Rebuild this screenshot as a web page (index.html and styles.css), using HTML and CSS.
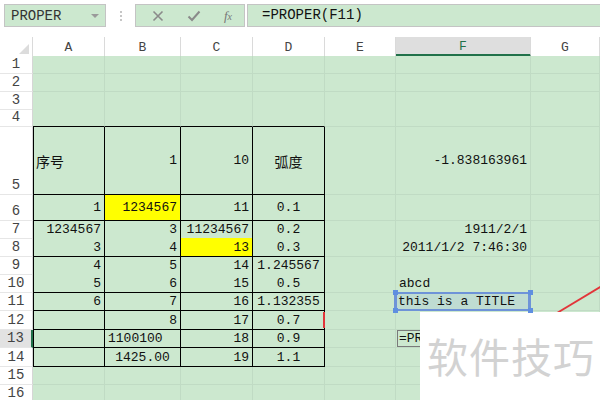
FILE: index.html
```html
<!DOCTYPE html>
<html lang="zh">
<head>
    <meta charset="UTF-8">
    <title>PROPER</title>
    <link rel="stylesheet" href="styles.css">
</head>
<body>
    <div class="toolbar">
        <div class="name-box">
            <span>PROPER</span>
            <span class="caret"></span>
        </div>
        <div class="grip"><i></i><i></i><i></i></div>
        <div class="fx-box">
            <svg width="12" height="12" viewBox="0 0 12 12"><path d="M1.5 1.5l9 9M10.5 1.5l-9 9" stroke="#8a8a8a" stroke-width="1.6"/></svg>
            <svg width="14" height="12" viewBox="0 0 14 12"><path d="M1.5 6.5l3.5 3.5 7.5-8.5" stroke="#8a8a8a" stroke-width="2" fill="none"/></svg>
            <span class="fx">f<small>x</small></span>
        </div>
        <div class="formula">=PROPER(F11)</div>
    </div>

    <div class="sheet" id="sheet">
        <div class="row head">
            <div class="corner"></div>
            <div class="col-head">A</div>
            <div class="col-head">B</div>
            <div class="col-head">C</div>
            <div class="col-head">D</div>
            <div class="col-head">E</div>
            <div class="col-head active">F</div>
            <div class="col-head">G</div>
        </div>
    </div>

    <svg class="arrow" width="600" height="400"><line x1="557" y1="313" x2="602" y2="286" stroke="#e2353a" stroke-width="2"/></svg>
    <div class="watermark">软件技巧</div>

    <script>
        const sheet = document.getElementById('sheet');
        const heights = [18, 18, 17, 18, 68, 26, 17, 19, 17, 19, 18, 19, 18, 19, 18, 18];
        const cols = ['A', 'B', 'C', 'D', 'E', 'F', 'G'];

        // [text, classes]
        const data = {
            5: { A: ['序号', 'cjk'], B: ['1', 'r'], C: ['10', 'r'], D: ['弧度', 'c cjk'], F: ['-1.838163961', 'r'] },
            6: { A: ['1', 'r'], B: ['1234567', 'r yellow'], C: ['11', 'r'], D: ['0.1', 'c'] },
            7: { A: ['1234567', 'r'], B: ['3', 'r'], C: ['11234567', 'r'], D: ['0.2', 'c'], F: ['1911/2/1', 'r'] },
            8: { A: ['3', 'r'], B: ['4', 'r'], C: ['13', 'r yellow'], D: ['0.3', 'c'], F: ['2011/1/2 7:46:30', 'r'] },
            9: { A: ['4', 'r'], B: ['5', 'r'], C: ['14', 'r'], D: ['1.245567', 'c'] },
            10: { A: ['5', 'r'], B: ['6', 'r'], C: ['15', 'r'], D: ['0.5', 'c'], F: ['abcd', ''] },
            11: { A: ['6', 'r'], B: ['7', 'r'], C: ['16', 'r'], D: ['1.132355', 'c'], F: ['this is a TITLE', 'selected'] },
            12: { B: ['8', 'r'], C: ['17', 'r'], D: ['0.7', 'c mark'] },
            13: { B: ['1100100', ''], C: ['18', 'r'], D: ['0.9', 'c'], F: ['=PR', 'editing'] },
            14: { B: ['1425.00', 'c'], C: ['19', 'r'], D: ['1.1', 'c'] }
        };

        heights.forEach((h, i) => {
            const n = i + 1;
            const row = document.createElement('div');
            row.className = 'row';
            row.style.height = h + 'px';

            const head = document.createElement('div');
            head.className = 'row-head' + (n === 13 ? ' active' : '');
            head.textContent = n;
            row.appendChild(head);

            cols.forEach((c, ci) => {
                const cell = document.createElement('div');
                const entry = (data[n] || {})[c];
                cell.className = 'cell';
                if (entry) {
                    cell.className += ' ' + entry[1];
                    const span = document.createElement('span');
                    span.textContent = entry[0];
                    cell.appendChild(span);
                }
                if (n >= 5 && n <= 14 && ci < 4) cell.classList.add('box');
                if (n >= 5 && n <= 14 && ci === 0) cell.classList.add('box-left');
                if (n === 4 && ci < 4) cell.classList.add('box-top');
                if (entry && entry[1] === 'selected') {
                    ['tl', 'tr', 'bl', 'br'].forEach(p => {
                        const handle = document.createElement('i');
                        handle.className = 'handle ' + p;
                        cell.appendChild(handle);
                    });
                }
                row.appendChild(cell);
            });
            sheet.appendChild(row);
        });
    </script>
</body>
</html>
```

FILE: styles.css
```css
/* Spreadsheet view */
body {
    margin: 0;
    width: 600px;
    height: 400px;
    overflow: hidden;
    position: relative;
    background-color: #fff;
    font-family: "Liberation Mono", "Noto Sans CJK SC", monospace;
    font-size: 13px;
    color: #111;
}

.toolbar {
    display: flex;
    align-items: flex-start;
    height: 37px;
    padding-top: 4px;
    box-sizing: border-box;
}

.name-box {
    display: flex;
    align-items: center;
    justify-content: space-between;
    margin-left: 4px;
    width: 102px;
    height: 23px;
    padding: 0 6px 0 6px;
    box-sizing: border-box;
    border: 1px solid #c4c4c4;
    background-color: #cce8cf;
    color: #333;
    font-size: 14px;
}

.caret {
    width: 0;
    height: 0;
    border-left: 4px solid transparent;
    border-right: 4px solid transparent;
    border-top: 4px solid #9a9a9a;
}

.grip {
    display: flex;
    flex-direction: column;
    gap: 2px;
    margin: 7px 13px 0 14px;
}

.grip i {
    width: 2px;
    height: 2px;
    background-color: #c6c6c6;
}

.fx-box {
    display: flex;
    align-items: center;
    justify-content: space-between;
    width: 110px;
    height: 23px;
    padding: 0 12px 0 16px;
    box-sizing: border-box;
    border: 1px solid #c4c4c4;
    background-color: #cce8cf;
}

.fx {
    font-family: "Liberation Serif", serif;
    font-style: italic;
    font-size: 13px;
    color: #777;
}

.fx small {
    font-size: 10px;
}

.formula {
    flex: 1;
    height: 23px;
    margin-left: 2px;
    padding-left: 14px;
    line-height: 21px;
    box-sizing: border-box;
    border: 1px solid #c4c4c4;
    border-right: none;
    background-color: #cce8cf;
    font-size: 14px;
}

.sheet {
    display: flex;
    flex-direction: column;
}

.row {
    display: grid;
    grid-template-columns: 33px 72px 76px 72px 72px 71px 135px 1fr;
}

.row.head {
    height: 19px;
}

.corner {
    position: relative;
    border-right: 1px solid #dadada;
}

.corner::after {
    content: "";
    position: absolute;
    right: 3px;
    bottom: 3px;
    border-left: 10px solid transparent;
    border-bottom: 10px solid #dcdcdc;
}

.col-head {
    display: flex;
    align-items: center;
    justify-content: center;
    border-right: 1px solid #dadada;
    color: #444;
}

.col-head.active {
    background-color: #dedede;
    border-bottom: 3px solid #21714a;
    color: #21714a;
    padding-top: 2px;
}

.row-head {
    display: flex;
    align-items: flex-end;
    justify-content: center;
    padding-bottom: 1px;
    box-sizing: border-box;
    border-right: 1px solid #d6d6d6;
    border-bottom: 1px solid #e6e6e6;
    color: #444;
    font-size: 14px;
}

.row-head.active {
    background-color: #e2e2e2;
    border-right: 2px solid #21714a;
}

.cell {
    position: relative;
    display: flex;
    align-items: center;
    padding: 0 3px;
    box-sizing: border-box;
    white-space: nowrap;
    background-color: #cce8cf;
    border-right: 1px solid #c0dbc4;
    border-bottom: 1px solid #c0dbc4;
}

.cell.r {
    justify-content: flex-end;
}

.cell.c {
    justify-content: center;
}

.cell.cjk span {
    font-size: 14px;
}

.cell.yellow {
    background-color: #ffff00;
}

.cell.box {
    border-right-color: #000;
    border-bottom-color: #000;
}

.cell.box-left {
    box-shadow: inset 1px 0 #000;
}

.cell.box-top {
    border-bottom-color: #000;
}

.cell.mark::after {
    content: "";
    position: absolute;
    right: -1px;
    top: 1px;
    bottom: 1px;
    width: 2px;
    background-color: #e2353a;
}

.cell.selected {
    background-color: #bfdcd2;
    padding-left: 2px;
}

.cell.selected::after {
    content: "";
    position: absolute;
    inset: -1px -1px -1px -2px;
    border: 2px solid #6e93d8;
    border-left-width: 3px;
    border-right-width: 3px;
}

.handle {
    position: absolute;
    z-index: 2;
    width: 5px;
    height: 5px;
    background-color: #5f8fe0;
}

.handle.tl { left: -3px; top: -3px; }
.handle.tr { right: -3px; top: -3px; }
.handle.bl { left: -3px; bottom: -3px; }
.handle.br { right: -3px; bottom: -3px; }

.cell.editing span {
    width: 80px;
    padding: 0 1px;
    border: 1px solid #7a7a7a;
    line-height: 15px;
    margin-left: -2px;
    background-color: #cce8cf;
}

.arrow {
    position: absolute;
    left: 0;
    top: 0;
    pointer-events: none;
}

.watermark {
    position: absolute;
    left: 420px;
    top: 312px;
    width: 180px;
    height: 88px;
    padding-left: 7px;
    box-sizing: border-box;
    background-color: #fff;
    color: #d2d2d2;
    font-family: "Noto Sans CJK SC", sans-serif;
    font-size: 41px;
    line-height: 86px;
    letter-spacing: 1px;
}
```
